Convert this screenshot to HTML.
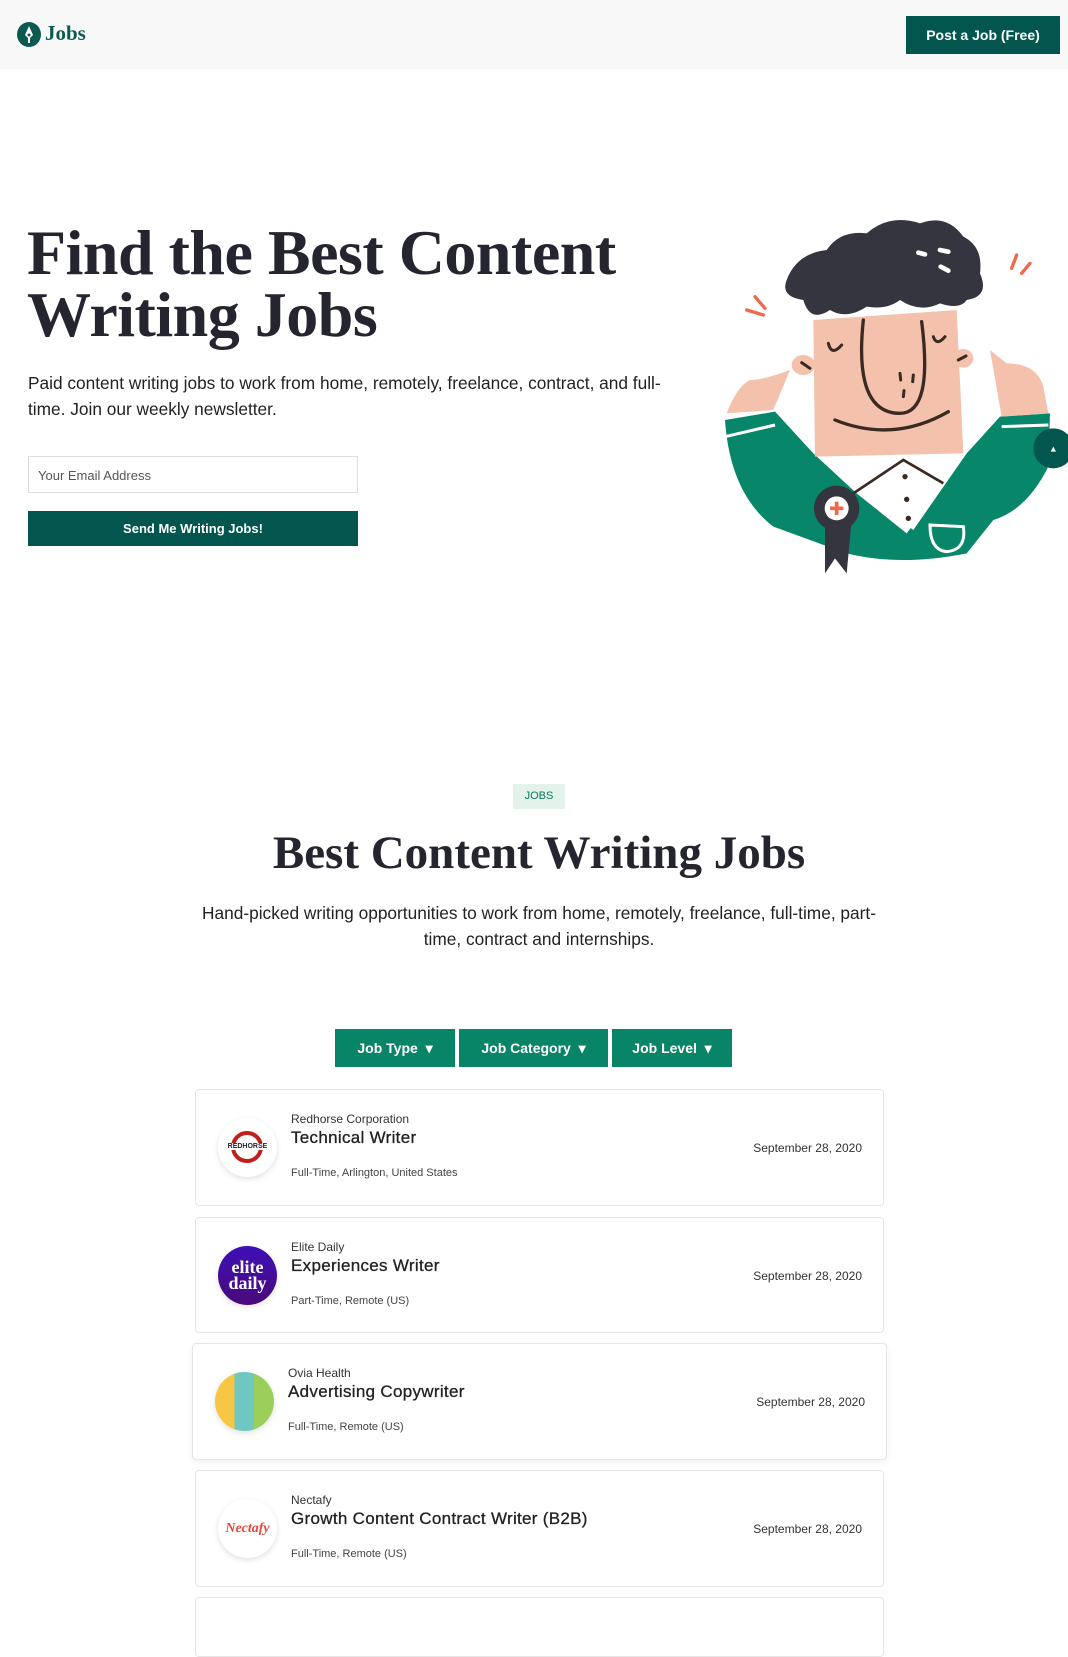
<!DOCTYPE html>
<html><head><meta charset="utf-8"><style>
*{box-sizing:border-box;margin:0;padding:0}
body{width:1068px;height:1600px;overflow:hidden;background:#fff;font-family:"Liberation Sans",sans-serif;color:#24242e;position:relative}
.a{position:absolute}
.serif{font-family:"Liberation Serif",serif}
.card{position:absolute;border:1px solid #e6e6e6;border-radius:4px;background:#fff}
.logo{position:absolute;width:59px;height:59px;border-radius:50%;box-shadow:0 2px 6px rgba(0,0,0,.12);overflow:hidden}
.co{position:absolute;font-size:12px;color:#333}
.ti{position:absolute;font-size:17px;color:#222;letter-spacing:.3px;-webkit-text-stroke:0.3px #222}
.me{position:absolute;font-size:11px;color:#444}
.dt{position:absolute;font-size:12px;color:#333;right:21px}
.fb{position:absolute;top:1029px;height:38px;background:#088467;color:#fff;font-size:14px;font-weight:bold;text-align:center;line-height:38px}
</style></head><body>
<div class="a" style="left:0;top:0;width:1068px;height:69px;background:#f8f8f8"></div>
<div class="a" style="left:17px;top:22px;width:24px;height:25px;border-radius:50%;background:#0a5a50"></div>
<svg class="a" style="left:17px;top:22px" width="24" height="25" viewBox="0 0 24 25"><path d="M12 4 L16 13 L13 16 L13 21 L11 21 L11 16 L8 13Z" fill="#fff"/><circle cx="12" cy="13" r="1.5" fill="#0a5a50"/></svg>
<div class="a serif" style="left:45px;top:21px;font-size:21px;font-weight:bold;color:#0a5a50">Jobs</div>
<div class="a" style="left:906px;top:16px;width:154px;height:38px;background:#02564e;color:#fff;font-size:14px;font-weight:bold;text-align:center;line-height:38px">Post a Job (Free)</div>

<div class="a serif" style="left:27px;top:222px;font-size:64px;line-height:62px;font-weight:bold;color:#25252f;letter-spacing:-0.5px">Find the Best Content<br>Writing Jobs</div>
<div class="a" style="left:28px;top:370px;width:660px;font-size:17.3px;line-height:26px;color:#222">Paid content writing jobs to work from home, remotely, freelance, contract, and full-time. Join our weekly newsletter.</div>
<div class="a" style="left:28px;top:456px;width:330px;height:37px;border:1px solid #ddd;font-size:13px;color:#555;padding:11px 9px">Your Email Address</div>
<div class="a" style="left:28px;top:511px;width:330px;height:35px;background:#02564e;color:#fff;font-size:13px;font-weight:bold;text-align:center;line-height:35px">Send Me Writing Jobs!</div>

<svg class="a" style="left:700px;top:200px" width="368" height="380" viewBox="0 0 1104 1140">
<path d="M75 660 L225 635 L340 760 L470 880 L620 1000 L800 760 L900 650 L1050 640 L1045 800 Q980 930 880 960 L800 1060 Q600 1100 440 1060 L220 980 Q90 880 75 660Z" fill="#07866a"/>
<path d="M340 740 L610 780 L800 760 L640 990 L460 860Z" fill="#fff"/>
<path d="M460 880 L610 780 L730 850" stroke="#3a2a22" stroke-width="8" fill="none"/>
<circle cx="615" cy="830" r="8" fill="#3a2a22"/><circle cx="620" cy="898" r="8" fill="#3a2a22"/><circle cx="625" cy="955" r="8" fill="#3a2a22"/>
<path d="M690 975 L790 980 Q800 1050 740 1055 Q690 1050 690 975Z" stroke="#fff" stroke-width="9" fill="none"/>
<path d="M75 710 L225 675" stroke="#fff" stroke-width="9"/><path d="M905 680 L1045 675" stroke="#fff" stroke-width="9"/>
<path d="M340 360 L770 330 L790 760 L345 770Z" fill="#f4c1ac"/>
<path d="M80 640 Q110 560 150 540 Q190 540 270 510 L220 630Z" fill="#f4c1ac"/>
<path d="M870 450 L920 490 Q1010 490 1030 560 L1045 640 L905 650Z" fill="#f4c1ac"/>
<ellipse cx="310" cy="495" rx="35" ry="30" fill="#f4c1ac"/><ellipse cx="790" cy="475" rx="30" ry="28" fill="#f4c1ac"/>
<path d="M260 240 Q290 160 380 150 Q420 90 500 100 Q570 40 660 70 Q740 40 790 110 Q850 140 840 220 Q870 290 800 300 Q780 330 720 310 Q660 340 600 300 Q560 330 500 320 Q440 360 390 330 Q330 370 310 300 Q240 290 260 240Z" fill="#35353f"/>
<path d="M655 158 L675 163 M720 150 L745 155 M722 200 L745 212" stroke="#fff" stroke-width="14" stroke-linecap="round"/>
<path d="M490 360 Q460 640 600 640 Q700 640 665 365" stroke="#3a2a22" stroke-width="10" fill="none" stroke-linecap="round"/>
<path d="M385 430 Q395 470 425 435 M700 410 Q710 440 735 410" stroke="#3a2a22" stroke-width="9" fill="none" stroke-linecap="round"/>
<path d="M405 660 Q580 730 745 635" stroke="#3a2a22" stroke-width="10" fill="none" stroke-linecap="round"/>
<path d="M600 520 L602 540 M640 525 L638 545 M612 572 L610 590 M305 488 L330 505 M775 480 L798 468" stroke="#3a2a22" stroke-width="9" stroke-linecap="round"/>
<path d="M140 330 L190 345 M165 290 L195 325 M935 205 L950 165 M965 220 L990 190" stroke="#ef6a4a" stroke-width="10" stroke-linecap="round"/>
<path d="M375 960 L375 1120 L405 1075 L440 1120 L455 960Z" fill="#35353f"/>
<circle cx="410" cy="925" r="68" fill="#35353f"/><circle cx="410" cy="925" r="36" fill="#fff"/>
<path d="M410 905 V945 M390 925 H430" stroke="#ef6a4a" stroke-width="11"/>
<circle cx="1060" cy="745" r="60" fill="#02564e"/><path d="M1052 755 L1060 740 L1068 755Z" fill="#fff"/>
</svg>

<div class="a" style="left:513px;top:784px;width:52px;height:25px;background:#e3f3ec;border-radius:2px;color:#0a7a5a;font-size:11px;text-align:center;line-height:25px">JOBS</div>
<div class="a serif" style="left:0;top:826px;width:1078px;text-align:center;font-size:47px;font-weight:bold;color:#25252f">Best Content Writing Jobs</div>
<div class="a" style="left:199px;top:900px;width:680px;text-align:center;font-size:17.3px;line-height:26px;color:#222">Hand-picked writing opportunities to work from home, remotely, freelance, full-time, part-time, contract and internships.</div>
<div class="fb" style="left:335px;width:120px">Job Type &nbsp;▾</div>
<div class="fb" style="left:459px;width:149px">Job Category &nbsp;▾</div>
<div class="fb" style="left:612px;width:120px">Job Level &nbsp;▾</div>

<div class="card" style="left:195px;top:1089px;width:689px;height:117px">
<div class="logo" style="left:22px;top:28px;background:#fff"><div class="a" style="left:13px;top:13px;width:32px;height:32px;border:4px solid #c0201c;border-radius:50%"></div><div class="a" style="left:6px;top:25px;width:47px;font-size:7px;background:#fff;text-align:center;font-weight:bold">REDHORSE</div></div>
<div class="co" style="left:95px;top:22px">Redhorse Corporation</div><div class="ti" style="left:95px;top:38px">Technical Writer</div><div class="me" style="left:95px;top:77px">Full-Time, Arlington, United States</div><div class="dt" style="top:51px">September 28, 2020</div></div>

<div class="card" style="left:195px;top:1217px;width:689px;height:116px">
<div class="logo" style="left:22px;top:28px;background:linear-gradient(#3d0fb8,#4a0a7a);color:#fff;font-family:'Liberation Serif',serif;font-weight:bold;font-size:18px;line-height:16px;text-align:center;padding-top:13px">elite<br>daily</div>
<div class="co" style="left:95px;top:22px">Elite Daily</div><div class="ti" style="left:95px;top:38px">Experiences Writer</div><div class="me" style="left:95px;top:77px">Part-Time, Remote (US)</div><div class="dt" style="top:51px">September 28, 2020</div></div>

<div class="card" style="left:192px;top:1343px;width:695px;height:117px;box-shadow:0 2px 8px rgba(0,0,0,.06)">
<div class="logo" style="left:22px;top:28px;background:linear-gradient(90deg,#f6c644 33%,#6fc7c2 33%,#6fc7c2 66%,#9bcf5a 66%)"></div>
<div class="co" style="left:95px;top:22px">Ovia Health</div><div class="ti" style="left:95px;top:38px">Advertising Copywriter</div><div class="me" style="left:95px;top:77px">Full-Time, Remote (US)</div><div class="dt" style="top:51px">September 28, 2020</div></div>

<div class="card" style="left:195px;top:1470px;width:689px;height:117px">
<div class="logo" style="left:22px;top:28px;background:#fff;color:#e5483c;font-family:'Liberation Serif',serif;font-style:italic;font-weight:bold;font-size:14px;text-align:center;line-height:59px">Nectafy</div>
<div class="co" style="left:95px;top:22px">Nectafy</div><div class="ti" style="left:95px;top:38px">Growth Content Contract Writer (B2B)</div><div class="me" style="left:95px;top:77px">Full-Time, Remote (US)</div><div class="dt" style="top:51px">September 28, 2020</div></div>

<div class="card" style="left:195px;top:1597px;width:689px;height:60px"></div>
</body></html>
